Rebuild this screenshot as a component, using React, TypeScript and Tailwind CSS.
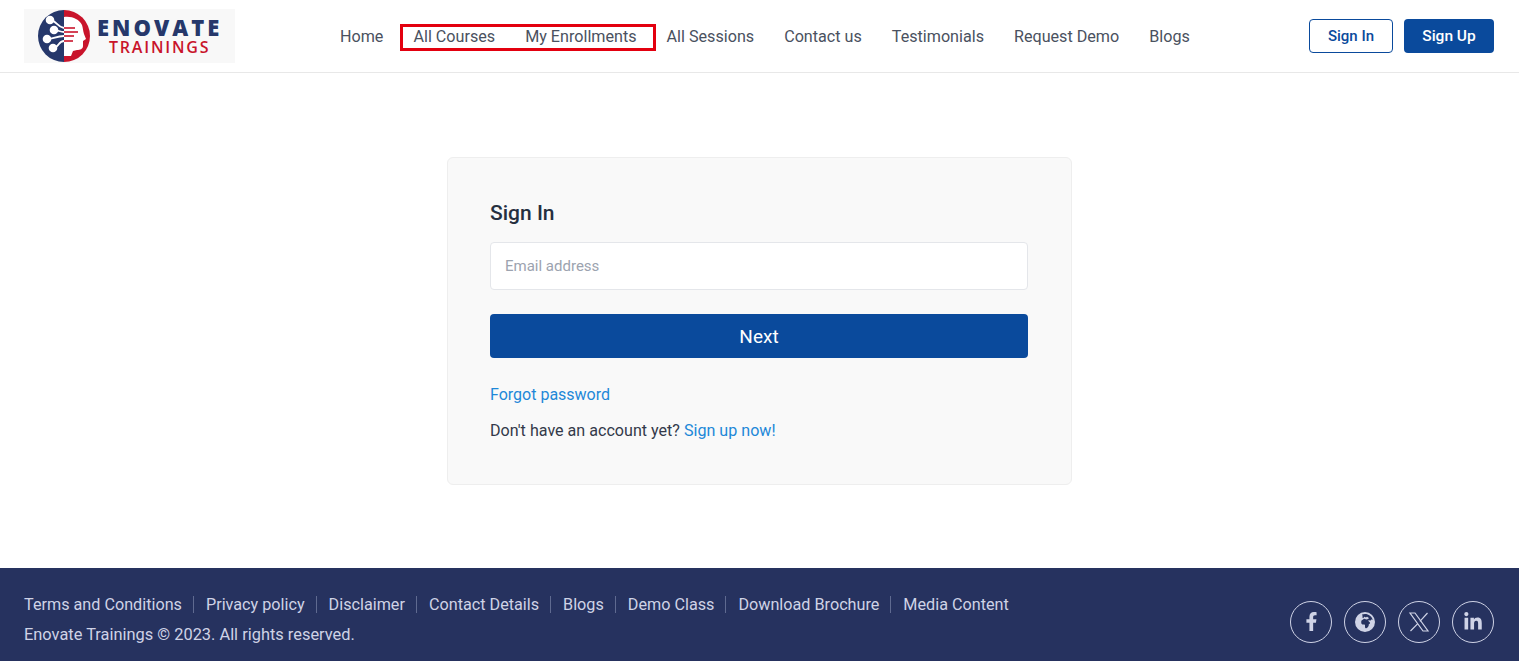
import { FaFacebookF, FaLinkedinIn } from 'react-icons/fa';
import { FaEarthAfrica } from 'react-icons/fa6';

const navLinks = ['Home', 'All Courses', 'My Enrollments', 'All Sessions', 'Contact us', 'Testimonials', 'Request Demo', 'Blogs'];
const footerLinks = ['Terms and Conditions', 'Privacy policy', 'Disclaimer', 'Contact Details', 'Blogs', 'Demo Class', 'Download Brochure', 'Media Content'];

function Logo() {
    return (
        <div className="flex h-[54px] w-[211px] items-center bg-[#f8f8f8] pl-[13px]">
            <svg width="54" height="54" viewBox="0 0 54 54" className="shrink-0">
                <path d="M27 1a26 26 0 0 0 0 52z" fill="#26386b" />
                <path d="M27 1a26 26 0 0 1 0 52z" fill="#c9142b" />
                {/* head profile */}
                <path d="M27 8c8-1 15 2 18 8 1 3 1 6 2 9l2 5-3 2 0 5c0 3-3 4-6 4l-4 1-2 5-7 0z" fill="#fff" />
                <g stroke="#fff" strokeWidth="1.8" fill="none">
                    <path d="M13 11c6 0 7 7 14 8" />
                    <path d="M17 21c4 0 6 2 10 2" />
                    <path d="M10 30c7 0 9-3 17-3" />
                    <path d="M16 39c6 0 5-7 11-7" />
                </g>
                <g stroke="#c9142b" strokeWidth="1.6" fill="none">
                    <path d="M27 19h11" />
                    <path d="M27 23h14" />
                    <path d="M27 27h10" />
                    <path d="M27 32h9" />
                </g>
                <g fill="#fff">
                    <circle cx="13" cy="11" r="4.3" />
                    <circle cx="17" cy="21" r="4.3" />
                    <circle cx="10" cy="30" r="4.3" />
                    <circle cx="16" cy="39" r="4.3" />
                </g>
            </svg>
            <div className="ml-[6px] flex flex-col items-center pt-[1px] font-['Open_Sans',sans-serif]">
                <span className="text-[22px] font-extrabold tracking-[3px] text-[#26386b] leading-[20px]">ENOVATE</span>
                <span className="mt-[1px] text-[16px] font-semibold tracking-[1.8px] text-[#c9142b] leading-[18px]">TRAININGS</span>
            </div>
        </div>
    );
}

const socialClass = 'flex h-[42px] w-[42px] items-center justify-center rounded-full border border-[#cfd3e6]';

export default function App() {
    return (
        <div className="flex min-h-[661px] flex-col bg-white font-['Roboto',sans-serif]">
            {/* Header */}
            <header className="flex h-[73px] items-center border-b border-[#e8e8e8] pl-[24px] pr-[25px]">
                <Logo />
                <nav className="relative ml-[90px] mr-auto flex items-center pt-[2px]">
                    {navLinks.map((link) => (
                        <a key={link} href="#" className="px-[15px] text-[16.15px] text-[#4a5160] whitespace-nowrap">
                            {link}
                        </a>
                    ))}
                    <div className="absolute left-[75px] top-[1px] h-[27px] w-[256px] border-[3px] border-[#e3000f]" />
                </nav>
                <div className="flex items-center gap-[11px]">
                    <button className="h-[34px] w-[84px] rounded-[4px] border border-[#0a4a9c] bg-white pt-[1px] text-[15px] font-medium text-[#0a4a9c]">
                        Sign In
                    </button>
                    <button className="h-[34px] w-[90px] rounded-[4px] bg-[#0a4a9c] pt-[1px] text-[15.5px] font-medium text-white">
                        Sign Up
                    </button>
                </div>
            </header>

            {/* Sign in card */}
            <main className="flex flex-1 justify-center pt-[84px]">
                <div className="h-[328px] w-[625px] rounded-[6px] border border-[#eeeeee] bg-[#f9f9f9] pl-[42px] pr-[43px] pt-[42px]">
                    <h2 className="text-[21px] font-medium leading-[26px] text-[#252f40]">Sign In</h2>
                    <input
                        placeholder="Email address"
                        className="mt-[16px] h-[48px] w-full rounded-[4px] border border-[#e4e6ea] bg-white px-[14px] text-[15px] placeholder:text-[#9ca3af]"
                    />
                    <button className="mt-[24px] h-[44px] w-full rounded-[4px] bg-[#0a4a9c] pt-[2px] text-[19px] text-white">Next</button>
                    <a href="#" className="mt-[25px] block text-[16px] leading-[24px] text-[#1e88d8]">Forgot password</a>
                    <p className="mt-[12px] text-[16.1px] leading-[24px] text-[#33394a]">
                        Don't have an account yet? <a href="#" className="text-[#1e88d8]">Sign up now!</a>
                    </p>
                </div>
            </main>

            {/* Footer */}
            <footer className="flex h-[93px] items-center justify-between bg-[#26325f] pl-[24px] pr-[25px] pt-[14px]">
                <div className="text-[16.2px] text-[#cfd3e6]">
                    <div className="flex items-center">
                        {footerLinks.map((link, i) => (
                            <a
                                key={link}
                                href="#"
                                className={i === footerLinks.length - 1 ? 'leading-[17px]' : 'mr-[12px] border-r border-[#5f6a90] pr-[11px] leading-[17px]'}
                            >
                                {link}
                            </a>
                        ))}
                    </div>
                    <p className="mt-[10px] text-[16.4px] leading-[24px]">Enovate Trainings © 2023. All rights reserved.</p>
                </div>
                <div className="flex items-center gap-[12px] text-[#cfd3e6]">
                    <a href="#" className={socialClass}><FaFacebookF size={19} /></a>
                    <a href="#" className={socialClass}><FaEarthAfrica size={20} /></a>
                    <a href="#" className={socialClass}>
                        <svg width="24" height="24" viewBox="0 0 24 24" fill="none" stroke="currentColor" strokeWidth="1.2">
                            <path d="M3 3h5l13 18h-5z" />
                            <path d="M20.5 3l-7.6 8.4M10.8 13.6 3.5 21" />
                        </svg>
                    </a>
                    <a href="#" className={socialClass}><FaLinkedinIn size={20} /></a>
                </div>
            </footer>
        </div>
    );
}
